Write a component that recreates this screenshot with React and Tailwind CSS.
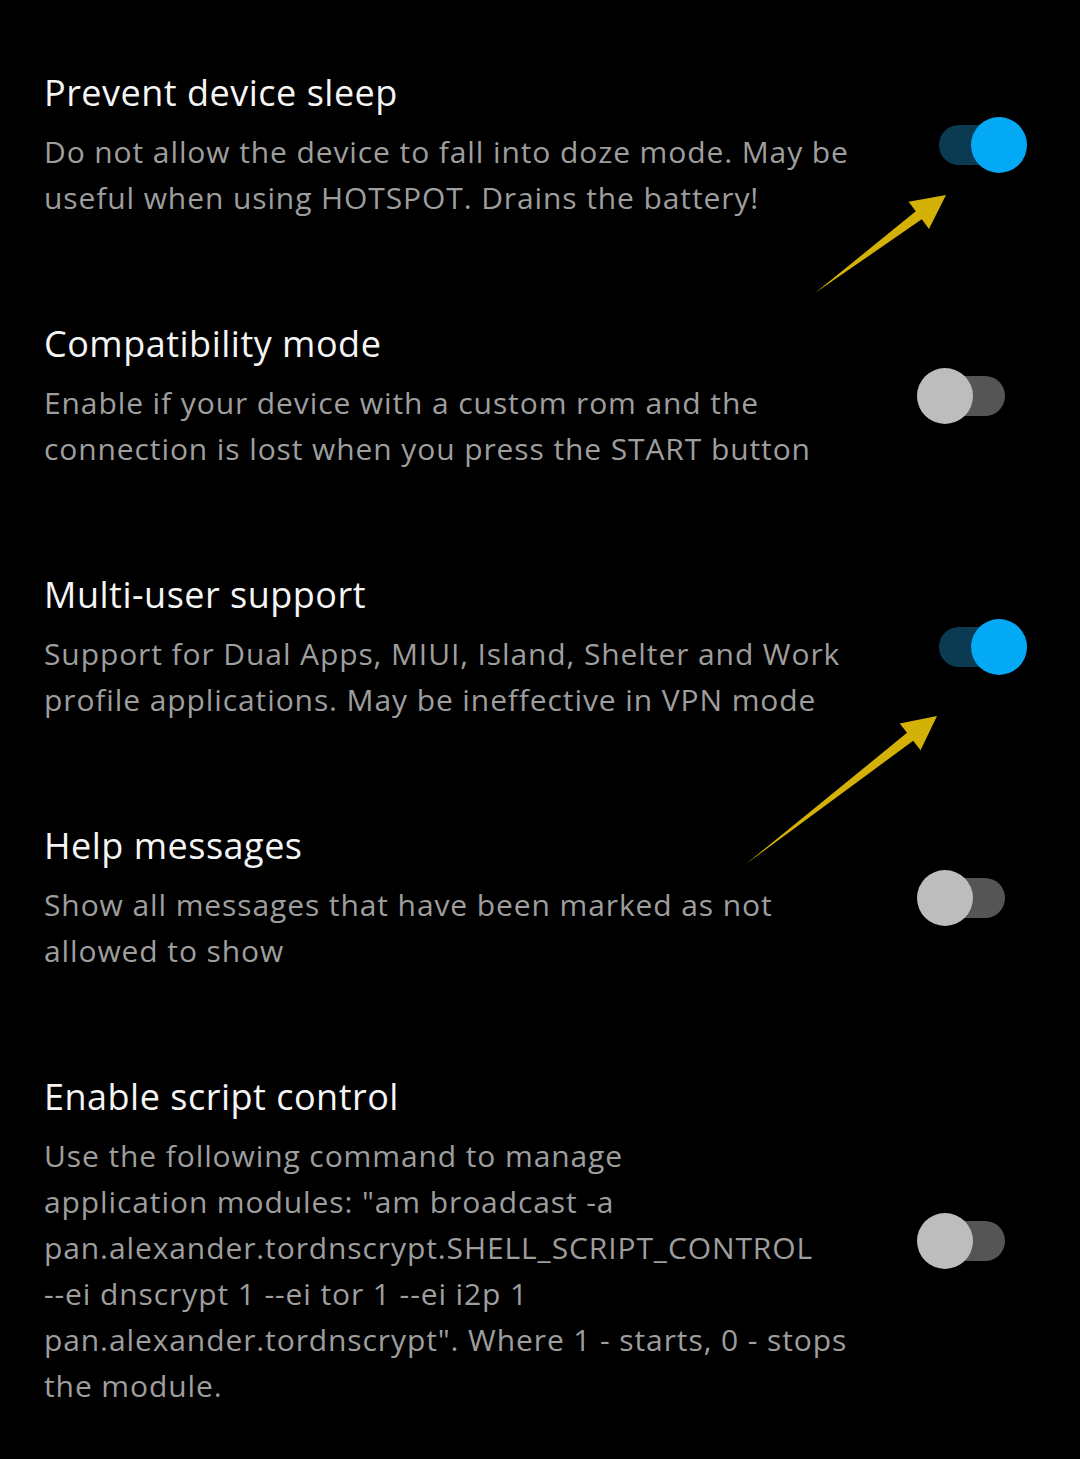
import React from 'react';

const items = [
	{
		title: 'Prevent device sleep',
		lines: ['Do not allow the device to fall into doze mode. May be', 'useful when using HOTSPOT. Drains the battery!'],
		on: true
	},
	{
		title: 'Compatibility mode',
		lines: ['Enable if your device with a custom rom and the', 'connection is lost when you press the START button'],
		on: false
	},
	{
		title: 'Multi-user support',
		lines: ['Support for Dual Apps, MIUI, Island, Shelter and Work', 'profile applications. May be ineffective in VPN mode'],
		on: true
	},
	{
		title: 'Help messages',
		lines: ['Show all messages that have been marked as not', 'allowed to show'],
		on: false
	},
	{
		title: 'Enable script control',
		lines: [
			'Use the following command to manage',
			'application modules: "am broadcast -a',
			'pan.alexander.tordnscrypt.SHELL_SCRIPT_CONTROL',
			'--ei dnscrypt 1 --ei tor 1 --ei i2p 1',
			'pan.alexander.tordnscrypt". Where 1 - starts, 0 - stops',
			'the module.'
		],
		on: false
	}
];

const Toggle = ({ on }) => (
	<div className="relative w-[110px] h-[56px] shrink-0">
		<div className={`absolute left-[22px] top-[8px] w-[66px] h-[40px] rounded-full ${on ? 'bg-[#0b3b52]' : 'bg-[#555555]'}`} />
		<div
			className={`absolute top-0 w-[56px] h-[56px] rounded-full ${on ? 'left-[54px] bg-[#03a9f4]' : 'left-0 bg-[#bdbdbd]'}`}
		/>
	</div>
);

const Arrow = ({ x1, y1, x2, y2 }) => {
	const dx = x2 - x1;
	const dy = y2 - y1;
	const len = Math.sqrt(dx * dx + dy * dy);
	const ux = dx / len;
	const uy = dy / len;
	const px = -uy;
	const py = ux;
	const hl = 34;
	const hw = 17;
	const bx = x2 - ux * hl;
	const by = y2 - uy * hl;
	const pts = [
		[x2, y2],
		[bx + px * hw, by + py * hw],
		[bx + px * 5, by + py * 5],
		[x1, y1],
		[bx - px * 5, by - py * 5],
		[bx - px * hw, by - py * hw]
	];
	return <polygon points={pts.map((p) => p.join(',')).join(' ')} fill="#d4b106" />;
};

export default function App() {
	return (
		<div
			className="relative w-[1080px] h-[1459px] bg-black overflow-hidden"
			style={{ fontFamily: '"Open Sans", "Noto Sans", sans-serif' }}
		>
			<div className="pt-[19px]">
				{items.map((item) => (
					<div key={item.title} className="flex items-center pl-[44px] pr-[53px] pt-[50px] pb-[49px]">
						<div className="flex-1">
							<div className="text-[36px] leading-[48px] tracking-[0.5px] text-[#f5f5f5]">{item.title}</div>
							<div className="mt-[12px] text-[30px] leading-[46px] tracking-[0.9px] text-[#9e9e9e]">
								{item.lines.map((l) => (
									<div key={l} className="whitespace-nowrap">{l}</div>
								))}
							</div>
						</div>
						<Toggle on={item.on} />
					</div>
				))}
			</div>
			<svg className="absolute inset-0 pointer-events-none" width="1080" height="1459">
				<Arrow x1={815} y1={293} x2={946} y2={195} />
				<Arrow x1={746} y1={864} x2={937} y2={716} />
			</svg>
		</div>
	);
}
